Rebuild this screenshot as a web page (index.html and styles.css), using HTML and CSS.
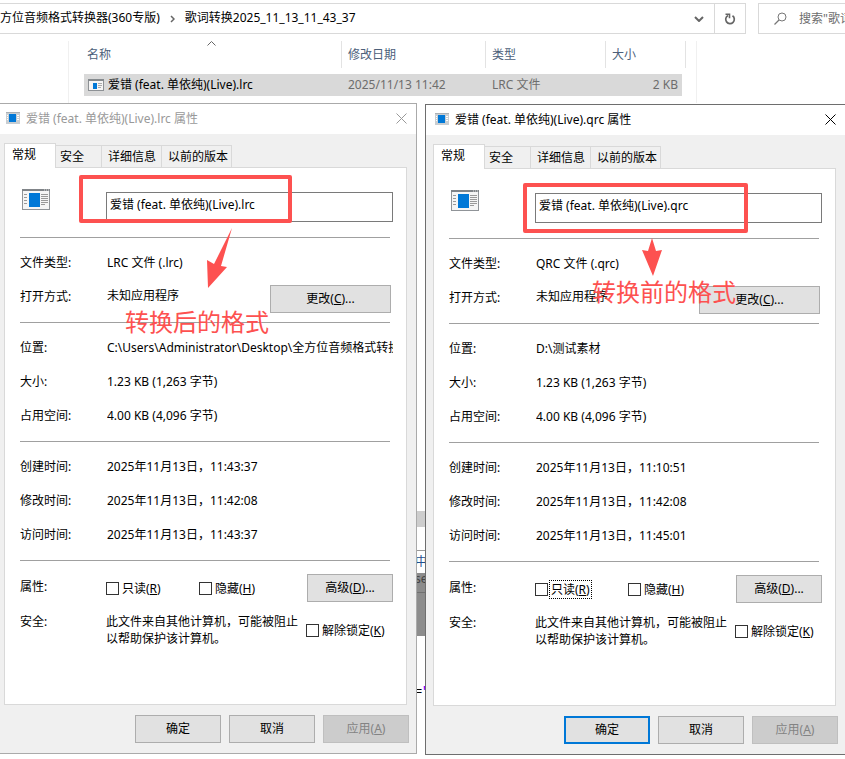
FILE: index.html
```
<!DOCTYPE html>
<html lang="zh-CN">
<head>
    <meta charset="UTF-8">
    <meta name="viewport" content="width=device-width, initial-scale=1.0">
    <title>歌词转换2025_11_13_11_43_37</title>
    <link rel="stylesheet" href="styles.css">
</head>
<body>
    <!-- Shared file icon -->
    <svg class="defs" aria-hidden="true">
        <symbol id="file-large" viewBox="0 0 28 21">
            <rect x="0.5" y="0.5" width="27" height="20" fill="#f5f5f5" stroke="#909498"/>
            <rect width="28" height="2" fill="#808488"/>
            <path d="M22 1h1M24 1h1M26 1h1" stroke="#ddd"/>
            <rect x="7" y="4" width="11" height="14" fill="#0078d7"/>
            <path d="M2 5.500h3M2 8.500h3M2 11.500h3M2 14.500h3M19 5.500h7M19 7.500h7M19 9.500h7M19 11.500h7M19 13.500h7M19 15.500h4" stroke="#999"/>
        </symbol>
        <symbol id="file-small" viewBox="0 0 16 12">
            <rect x="0.5" y="0.5" width="15" height="11" fill="#f5f5f5" stroke="#8d9195"/>
            <rect width="16" height="2" fill="#858a8e"/>
            <rect x="5" y="4" width="4" height="6" fill="#0078d7"/>
            <path d="M10 4.500h4M10 6.500h4M10 8.500h3" stroke="#aaa"/>
        </symbol>
        <symbol id="file-title" viewBox="0 0 14 12">
            <rect width="14" height="12" fill="#c9ced2"/>
            <rect width="14" height="1" fill="#aab0b5"/>
            <rect x="3" y="2" width="7" height="8" fill="#0078d7"/>
            <path d="M1 3.500h1M1 5.500h1M1 7.500h1M11 3.500h2M11 5.500h2M11 7.500h2" stroke="#fff"/>
        </symbol>
    </svg>

    <!-- Explorer window -->
    <header class="toolbar">
        <nav class="address">
            <a href="#">全方位音频格式转换器(360专版)</a>
            <svg class="crumb" width="5" height="8" viewBox="0 0 5 8"><path d="M1 1l3 3-3 3" fill="none" stroke="#666" stroke-width="1.500"/></svg>
            <a href="#">歌词转换2025_11_13_11_43_37</a>
            <button class="history" aria-label="历史记录"><svg width="10" height="6" viewBox="0 0 10 6"><path d="M1 1l4 4 4-4" fill="none" stroke="#666" stroke-width="2"/></svg></button>
            <button class="refresh" aria-label="刷新"><svg width="12" height="12" viewBox="0 0 12 12"><path d="M4 2.500A4.300 4.300 0 1 0 8.500 2.800" fill="none" stroke="#666" stroke-width="1.700"/><path d="M1.500 1.200h4v4" fill="none" stroke="#666" stroke-width="1.600"/></svg></button>
        </nav>
        <div class="search">
            <svg width="13" height="13" viewBox="0 0 13 13"><circle cx="8" cy="5" r="4" fill="none" stroke="#777"/><path d="M5 8L.5 12.500" stroke="#777" stroke-width="1.200"/></svg>
            <input type="text" aria-label="搜索" placeholder="搜索&quot;歌词转换2025_11_13_11_43_37&quot;">
        </div>
    </header>

    <main class="files">
        <table>
            <colgroup><col class="c-name"><col class="c-date"><col class="c-type"><col class="c-size"></colgroup>
            <thead>
                <tr>
                    <th>名称<svg class="sort" width="9" height="5" viewBox="0 0 9 5"><path d="M.5 4.500l4-4 4 4" fill="none" stroke="#666"/></svg></th>
                    <th>修改日期</th>
                    <th>类型</th>
                    <th>大小</th>
                </tr>
            </thead>
            <tbody>
                <tr>
                    <td><span class="file-name"><svg width="16" height="12"><use href="#file-small"/></svg>爱错 (feat. 单依纯)(Live).lrc</span></td>
                    <td>2025/11/13 11:42</td>
                    <td>LRC 文件</td>
                    <td>2 KB</td>
                </tr>
            </tbody>
        </table>
    </main>

    <div class="windows">
        <!-- Converted file -->
        <section class="dialog inactive">
            <div class="title">
                <svg width="14" height="12"><use href="#file-title"/></svg>
                <h2>爱错 (feat. 单依纯)(Live).lrc 属性</h2>
                <button class="close" aria-label="关闭"><svg width="11" height="11" viewBox="0 0 11 11"><path d="M.5 .5l10 10M10.500 .5l-10 10" stroke="currentColor"/></svg></button>
            </div>
            <div class="tabs">
                <button class="tab active">常规</button>
                <button class="tab">安全</button>
                <button class="tab wide">详细信息</button>
                <button class="tab wider">以前的版本</button>
            </div>
            <div class="panel">
                <div class="file-head">
                    <svg width="28" height="21"><use href="#file-large"/></svg>
                    <input type="text" aria-label="文件名" value="爱错 (feat. 单依纯)(Live).lrc">
                </div>
                <hr>
                <dl>
                    <dt>文件类型:</dt><dd>LRC 文件 (.lrc)</dd>
                    <dt>打开方式:</dt><dd class="open-with">未知应用程序<button class="btn change">更改(<u>C</u>)...</button></dd>
                </dl>
                <hr>
                <dl>
                    <dt>位置:</dt><dd>C:\Users\Administrator\Desktop\全方位音频格式转换器</dd>
                    <dt>大小:</dt><dd>1.23 KB (1,263 字节)</dd>
                    <dt>占用空间:</dt><dd>4.00 KB (4,096 字节)</dd>
                </dl>
                <hr>
                <dl>
                    <dt>创建时间:</dt><dd>2025年11月13日，11:43:37</dd>
                    <dt>修改时间:</dt><dd>2025年11月13日，11:42:08</dd>
                    <dt>访问时间:</dt><dd>2025年11月13日，11:43:37</dd>
                </dl>
                <hr>
                <div class="attrs">
                    <span class="name">属性:</span>
                    <label><input type="checkbox"><span>只读(<u>R</u>)</span></label>
                    <label><input type="checkbox"><span>隐藏(<u>H</u>)</span></label>
                    <button class="btn">高级(<u>D</u>)...</button>
                </div>
                <div class="security">
                    <span class="name">安全:</span>
                    <p>此文件来自其他计算机，可能被阻止以帮助保护该计算机。</p>
                    <label><input type="checkbox"><span>解除锁定(<u>K</u>)</span></label>
                </div>
            </div>
            <div class="actions">
                <button class="btn">确定</button>
                <button class="btn">取消</button>
                <button class="btn" disabled>应用(<u>A</u>)</button>
            </div>
            <div class="mark mark-after"></div>
            <svg class="arrow arrow-after" width="25" height="60" viewBox="0 0 25 60"><path d="M25 0L14 38l6 1L1 60 0 32l7 4z" fill="#fd5150"/></svg>
            <span class="note note-after">转换后的格式</span>
        </section>

        <!-- Editor showing between the two dialogs -->
        <div class="editor">
            <div class="scroll"></div>
            <div class="menu">中</div>
            <div class="tool">se</div>
            <div class="code">=<b>"</b></div>
        </div>

        <!-- Source file -->
        <section class="dialog">
            <div class="title">
                <svg width="14" height="12"><use href="#file-title"/></svg>
                <h2>爱错 (feat. 单依纯)(Live).qrc 属性</h2>
                <button class="close" aria-label="关闭"><svg width="11" height="11" viewBox="0 0 11 11"><path d="M.5 .5l10 10M10.500 .5l-10 10" stroke="currentColor"/></svg></button>
            </div>
            <div class="tabs">
                <button class="tab active">常规</button>
                <button class="tab">安全</button>
                <button class="tab wide">详细信息</button>
                <button class="tab wider">以前的版本</button>
            </div>
            <div class="panel">
                <div class="file-head">
                    <svg width="28" height="21"><use href="#file-large"/></svg>
                    <input type="text" aria-label="文件名" value="爱错 (feat. 单依纯)(Live).qrc">
                </div>
                <hr>
                <dl>
                    <dt>文件类型:</dt><dd>QRC 文件 (.qrc)</dd>
                    <dt>打开方式:</dt><dd class="open-with">未知应用程序<button class="btn change">更改(<u>C</u>)...</button></dd>
                </dl>
                <hr>
                <dl>
                    <dt>位置:</dt><dd>D:\测试素材</dd>
                    <dt>大小:</dt><dd>1.23 KB (1,263 字节)</dd>
                    <dt>占用空间:</dt><dd>4.00 KB (4,096 字节)</dd>
                </dl>
                <hr>
                <dl>
                    <dt>创建时间:</dt><dd>2025年11月13日，11:10:51</dd>
                    <dt>修改时间:</dt><dd>2025年11月13日，11:42:08</dd>
                    <dt>访问时间:</dt><dd>2025年11月13日，11:45:01</dd>
                </dl>
                <hr>
                <div class="attrs">
                    <span class="name">属性:</span>
                    <label class="focused"><input type="checkbox"><span>只读(<u>R</u>)</span></label>
                    <label><input type="checkbox"><span>隐藏(<u>H</u>)</span></label>
                    <button class="btn">高级(<u>D</u>)...</button>
                </div>
                <div class="security">
                    <span class="name">安全:</span>
                    <p>此文件来自其他计算机，可能被阻止以帮助保护该计算机。</p>
                    <label><input type="checkbox"><span>解除锁定(<u>K</u>)</span></label>
                </div>
            </div>
            <div class="actions">
                <button class="btn default">确定</button>
                <button class="btn">取消</button>
                <button class="btn" disabled>应用(<u>A</u>)</button>
            </div>
            <div class="mark mark-before"></div>
            <svg class="arrow arrow-before" width="20" height="38" viewBox="0 0 20 38"><path d="M10 0l4 13 6-1-9 26L0 12l6 1z" fill="#fd5150"/></svg>
            <span class="note note-before">转换前的格式</span>
        </section>
    </div>
</body>
</html>
```
FILE: styles.css
```
* {
    box-sizing: border-box;
}

body {
    margin: 0;
    min-height: 100vh;
    background: #fff;
    color: #000;
    font: 12px/17px "Noto Sans", "Noto Sans CJK SC", sans-serif;
    overflow: hidden;
}

button, input {
    font: inherit;
    color: inherit;
}

svg {
    display: block;
    flex: none;
}

.defs {
    position: absolute;
    width: 0;
    height: 0;
}

/* Explorer toolbar */
.toolbar {
    display: flex;
    gap: 12px;
    height: 34px;
    padding-top: 3px;
    margin-left: -13px;
}

.address {
    flex: 1;
    display: flex;
    align-items: stretch;
    border: 1px solid #d9d9d9;
    white-space: nowrap;
}

.address a {
    color: #000;
    text-decoration: none;
    line-height: 28px;
}

.crumb {
    margin: 11px 10px 0;
}

.history, .refresh {
    display: flex;
    align-items: center;
    justify-content: center;
    width: 31px;
    padding: 0;
    border: 0;
    background: none;
}

.history {
    margin-left: auto;
}

.refresh {
    border-left: 1px solid #d9d9d9;
}

.search {
    display: flex;
    align-items: center;
    gap: 12px;
    width: 87px;
    padding-left: 15px;
    border: 1px solid #d9d9d9;
    border-right: 0;
}

.search input {
    width: 100%;
    min-width: 0;
    padding: 0;
    border: 0;
    outline: 0;
}

.search input::placeholder {
    color: #6d6d6d;
}

/* File list */
.files {
    height: 69px;
    margin: 0 148px 0 68px;
    padding: 7px 15px 0 16px;
    background: linear-gradient(#f0f0f0, #f0f0f0) left 7px / 1px 100% no-repeat,
        linear-gradient(#f0f0f0, #f0f0f0) right 7px / 1px 100% no-repeat;
}

.files table {
    width: 100%;
    table-layout: fixed;
    border-collapse: separate;
    border-spacing: 0;
}

.c-date { width: 144px; }
.c-type { width: 120px; }
.c-size { width: 76px; }

.files th {
    position: relative;
    height: 27px;
    padding: 0 6px;
    border-right: 1px solid #e3e3e3;
    text-align: left;
    font-weight: normal;
    color: #4c607a;
}

.files th:first-child {
    padding-left: 3px;
}

.files th:last-child {
    border-right: 0;
}

.files th:last-child::after {
    content: "";
    position: absolute;
    top: 0;
    right: -4px;
    width: 1px;
    height: 27px;
    background: #e3e3e3;
}

.sort {
    position: absolute;
    top: 0;
    left: 123px;
}

.files tbody::before {
    content: "";
    display: block;
    height: 6px;
}

.files td {
    height: 22px;
    padding: 0 6px 1px;
    background: #d9d9d9;
    color: #6d6d6d;
    white-space: nowrap;
}

.files td:first-child {
    padding-left: 4px;
    color: #000;
}

.files td:last-child {
    padding-right: 4px;
    text-align: right;
}

.file-name {
    display: flex;
    align-items: center;
    gap: 4px;
}

/* Property dialogs */
.windows {
    display: flex;
    align-items: flex-start;
    margin: 0 -1px 0 -4px;
}

.dialog {
    position: relative;
    flex: 1;
    min-width: 0;
    margin-top: 1px;
    border: 1px solid #6e6e6e;
    background: #f0f0f0;
}

.dialog.inactive {
    margin-top: 0;
    border-color: #aaa;
}

.title {
    display: flex;
    align-items: center;
    height: 30px;
    padding: 0 9px 2px 9px;
    background: #fff;
}

.title h2 {
    flex: 1;
    margin: 0 0 0 6px;
    font-size: 12px;
    font-weight: normal;
}

.inactive .title {
    color: #999;
}

.close {
    padding: 0;
    border: 0;
    background: none;
}

.tabs {
    display: flex;
    align-items: flex-end;
    height: 33px;
    padding: 0 7px;
}

.tab {
    width: 46px;
    height: 22px;
    padding: 0 0 0 4px;
    border: 1px solid #d9d9d9;
    border-left: 0;
    border-bottom: 0;
    background: #f0f0f0;
    text-align: left;
    white-space: nowrap;
}

.tab.active {
    position: relative;
    z-index: 1;
    width: 52px;
    height: 25px;
    margin-bottom: -1px;
    padding: 0 0 3px 7px;
    border-left: 1px solid #d9d9d9;
    background: #fff;
}

.tab.wide {
    width: 60px;
    padding-left: 6px;
}

.tab.wider {
    width: 70px;
    padding-left: 6px;
}

.panel {
    height: 538px;
    margin: 0 9px 0 7px;
    padding: 0 13px 0 15px;
    border: 1px solid #d9d9d9;
    background: #fff;
}

.file-head {
    display: flex;
    align-items: flex-start;
    height: 69px;
    padding: 21px 0 0 2px;
}

.file-head input {
    flex: 1;
    min-width: 0;
    height: 30px;
    margin: 3px 0 0 56px;
    padding: 0 3px 7px;
    border: 1px solid #7a7a7a;
    background: #fff;
}

.panel hr {
    height: 1px;
    margin: 0 3px 8px 0;
    border: 0;
    background: #a0a0a0;
}

.panel dl {
    display: grid;
    grid-template-columns: 87px 1fr;
    margin: 0 0 8px;
    line-height: 34px;
}

.panel dd {
    margin: 0;
    overflow: hidden;
    white-space: nowrap;
}

.panel .open-with {
    display: flex;
    justify-content: space-between;
    align-items: flex-end;
    padding: 0 2px 1px 0;
    height: 34px;
}

.btn {
    width: 86px;
    height: 28px;
    padding: 0 0 1px;
    border: 1px solid #adadad;
    background: #e1e1e1;
    line-height: 17px;
}

.btn.change {
    width: 121px;
}

.btn.default {
    border: 2px solid #0078d7;
}

.btn:disabled {
    border-color: #bfbfbf;
    background: #ccc;
    color: #838383;
}

.attrs, .security {
    display: flex;
}

.attrs {
    padding-top: 5px;
}

.name {
    width: 86px;
    padding-top: 4px;
}

.attrs label {
    width: 93px;
    height: 29px;
}

.attrs .btn {
    margin-left: auto;
}

label {
    display: flex;
    align-items: center;
    gap: 2px;
}

label span {
    padding: 0 1px;
}

.focused span {
    outline: 1px dotted #000;
}

input[type="checkbox"] {
    appearance: none;
    width: 13px;
    height: 13px;
    margin: 0;
    border: 1px solid #333;
    background: #fff;
}

.security {
    padding-top: 10px;
}

.security .name {
    padding-top: 0;
}

.security p {
    width: 194px;
    margin: 0 6px 0 0;
}

.actions {
    display: flex;
    justify-content: flex-end;
    gap: 8px;
    padding: 10px 7px;
}

/* Editor behind the dialogs */
.editor {
    width: 8px;
    overflow: hidden;
    white-space: nowrap;
}

.scroll {
    height: 16px;
    margin-top: 408px;
    background: #cdcdcd;
}

.menu {
    height: 23px;
    margin-top: 23px;
    padding-top: 2px;
    border-top: 1px solid #999;
    color: #1f4f8f;
    text-indent: -2px;
}

.tool {
    height: 63px;
    background: linear-gradient(#707070, #707070) 0 19px / 100% 1px no-repeat #8c8c8c;
    color: #444;
    text-indent: -2px;
    line-height: 12px;
}

.code {
    margin-top: 48px;
    font-family: "Liberation Mono", monospace;
    text-indent: -2px;
}

.code b {
    color: #8000ff;
}

/* Red annotations */
.mark, .arrow, .note {
    position: absolute;
    pointer-events: none;
}

.mark {
    border: 4px solid #fd5150;
    border-radius: 2px;
}

.mark-after {
    top: 71px;
    left: 82px;
    width: 213px;
    height: 48px;
}

.mark-before {
    top: 78px;
    left: 97px;
    width: 225px;
    height: 50px;
}

.arrow-after {
    top: 124px;
    left: 210px;
}

.arrow-before {
    top: 133px;
    left: 216px;
}

.note {
    color: #fd5150;
    font-size: 24px;
    line-height: 30px;
}

.note-after {
    top: 203px;
    left: 128px;
}

.note-before {
    top: 172px;
    left: 166px;
}
```
